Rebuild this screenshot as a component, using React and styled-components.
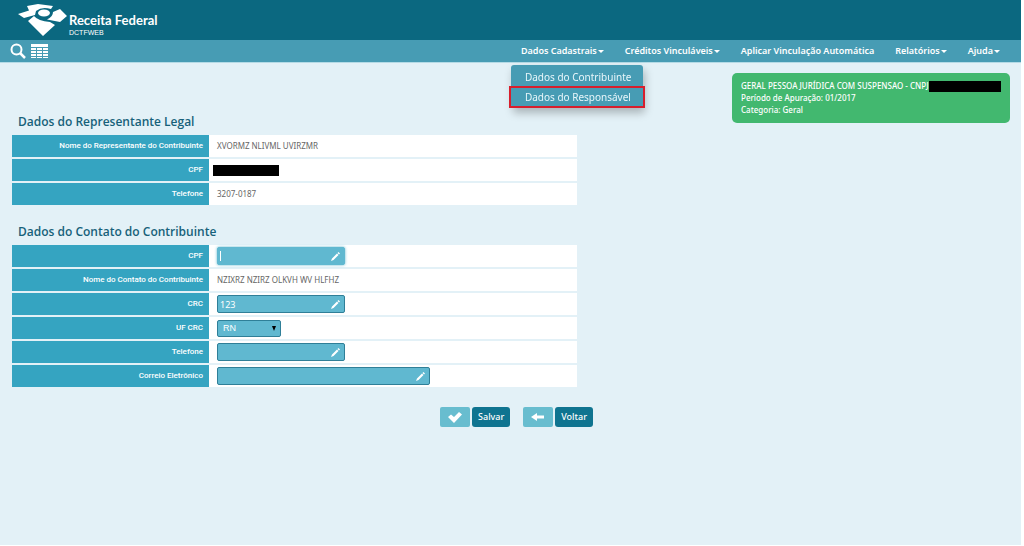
import React from "react";
import styled, { createGlobalStyle } from "styled-components";

const GlobalStyle = createGlobalStyle`
  *{
    box-sizing: border-box;
  }
  html{
    background: #fff;
  }
  body{
    margin: 0;
    font-family: "Noto Sans", "Open Sans", sans-serif;
  }
  button, input, select{
    font-family: inherit;
  }
`

const Page = styled.div`
  min-height: calc(100vh - 1px);
  margin-right: 3px;
  background: #e3f1f7;
`

const Header = styled.header`
  display: flex;
  height: 40px;
  padding: 3px 18px 0;
  background: #0b6880;
  color: #fff;
`

const Brand = styled.div`
  display: flex;
  flex-direction: column;
  padding: 9px 0 0 2px;
`

const BrandName = styled.strong`
  font-size: 13px;
  line-height: 16px;
  font-family: Lato, "Open Sans", sans-serif;
`

const BrandSystem = styled.span`
  font: 7px/10px "Liberation Sans", Arial, sans-serif;
`

const Toolbar = styled.div`
  display: flex;
  align-items: center;
  justify-content: space-between;
  height: 23px;
  padding: 0 21px 0 10px;
  background: #479cb4;
  border-bottom: 1px solid #b5dbe6;
`

const Tools = styled.div`
  display: flex;
  gap: 5px;
`

const ToolButton = styled.button`
  display: flex;
  padding: 0;
  border: 0;
  background: none;
  color: #fff;
`

const Menu = styled.nav`
  display: flex;
  gap: 21px;
`

const MenuItem = styled.div`
  position: relative;
`

const MenuLink = styled.a`
  display: flex;
  align-items: center;
  gap: 1px;
  color: #fff;
  font-size: 9px;
  line-height: 16px;
  font-weight: 600;
  text-decoration: none;
`

const Arrow = styled.span`
  border: 3px solid transparent;
  border-top-color: #fff;
  border-bottom: 0;
`

const Dropdown = styled.div`
  position: absolute;
  top: 22px;
  left: -10px;
  z-index: 1;
  width: 132px;
  padding: 3px 0 2px;
  border-radius: 3px;
  background: #479cb4;
  box-shadow: 2px 5px 8px rgba(0, 0, 0, 0.25);
`

const DropdownLink = styled.a`
  display: block;
  padding: 0 14px;
  color: #e8f6fa;
  font-size: 10px;
  line-height: 19px;
  white-space: nowrap;
  text-decoration: none;
  ${({ $marked }) => $marked && "margin-top: 1px; line-height: 18px; outline: 2px solid #d81e2c;"}
`

const Content = styled.main`
  display: grid;
  grid-template-columns: minmax(0, 565px) auto;
  justify-content: space-between;
  align-items: start;
  column-gap: 20px;
  padding: 10px 11px 20px 12px;
`

const Sections = styled.div`
  padding-top: 40px;
`

const Section = styled.section`
  margin-bottom: 16px;
`

const Title = styled.h2`
  margin: 0;
  padding: 0 6px 2px;
  color: #17617a;
  font-family: "Open Sans", sans-serif;
  font-size: 12px;
  line-height: 18px;
  font-weight: 600;
`

const Table = styled.table`
  width: 100%;
  border-collapse: separate;
  border-spacing: 0 2px;
  table-layout: fixed;
`

const Label = styled.th`
  width: 197px;
  height: 22px;
  padding: 0 6px 0 0;
  background: #35a4c1;
  color: #fff;
  font-family: Roboto, sans-serif;
  font-size: 8px;
  line-height: 12px;
  font-weight: 500;
  text-align: right;
`

const Value = styled.td`
  padding: 0 8px;
  background: #fff;
  color: #666;
  font-size: 8px;
  line-height: 12px;
`

const Redacted = styled.span`
  display: block;
  width: 66px;
  height: 11px;
  margin-left: -4px;
  background: #000;
`

const Field = styled.div`
  display: flex;
  align-items: center;
  justify-content: space-between;
  width: ${({ $wide }) => ($wide ? 213 : 128)}px;
  height: 18px;
  padding: 0 4px 0 2px;
  border: 1px solid #2f7f98;
  border-radius: 2px;
  background: #60b8d0;
  color: #fff;
  &:focus-within{
    border-color: #60b8d0;
    box-shadow: 0 0 3px #60b8d0;
  }
  &:focus-within::before{
    content: "";
    width: 1px;
    height: 10px;
    background: #fff;
  }
`

const Input = styled.input`
  flex: 1;
  min-width: 0;
  padding: 0;
  border: 0;
  outline: 0;
  background: none;
  color: #fff;
  caret-color: transparent;
  font-size: 9px;
`

const SelectBox = styled.div`
  display: grid;
  align-items: center;
  width: 64px;
  height: 17px;
  > *{
    grid-area: 1 / 1;
  }
`

const Select = styled.select`
  height: 17px;
  padding: 0 5px;
  appearance: none;
  border: 1px solid #2f7f98;
  border-radius: 2px;
  background: #60b8d0;
  color: #fff;
  font-size: 9px;
  font-family: "Liberation Sans", Arial, sans-serif;
`

const SelectArrow = styled.span`
  justify-self: end;
  margin-right: 5px;
  border: 2px solid transparent;
  border-top: 5px solid #000;
  border-bottom: 0;
  pointer-events: none;
`

const Summary = styled.aside`
  width: 278px;
  padding: 7px 9px;
  border-radius: 5px;
  background: #42b86f;
  color: #fff;
  font-size: 8px;
  line-height: 12px;
  font-weight: 500;
`

const SummaryLine = styled.div`
  display: flex;
  align-items: center;
  white-space: nowrap;
  span{
    flex: 1;
    height: 11px;
    background: #000;
  }
`

const Actions = styled.div`
  grid-column: 1 / -1;
  display: flex;
  justify-content: center;
  gap: 13px;
  padding: 2px 0 0 11px;
`

const Action = styled.button`
  display: flex;
  gap: 2px;
  padding: 0;
  border: 0;
  background: none;
  color: #fff;
  font-size: 9px;
  line-height: 20px;
  font-weight: 500;
`

const ActionIcon = styled.span`
  display: flex;
  align-items: center;
  justify-content: center;
  width: 30px;
  height: 20px;
  border-radius: 2px;
  background: #68bdcf;
`

const ActionText = styled.span`
  padding: 0 6px;
  border-radius: 3px;
  background: #0f7490;
`

const Logo = () => (
  <svg width="49" height="34" viewBox="0 0 49 34" fill="#fff" aria-hidden="true">
    <path d="M0 11 L11 7.500 L9 3 L20 1 L35 3 L33 6 Q24 3 18 8 L17 12 L6 15 Z" />
    <path d="M35 9 L42 6 L49 13 L42 19 L29 16.500 Q35 14 35 9 Z" />
    <path d="M10 18 L16 13 Q20 18 32 19 L37 22 L25 33 Z" />
    <ellipse cx="26" cy="10" rx="6" ry="3.500" />
  </svg>
)

const SearchIcon = () => (
  <svg width="16" height="16" viewBox="0 0 16 16" fill="none" stroke="#fff" aria-hidden="true">
    <circle cx="6.500" cy="6.500" r="5" strokeWidth="2" />
    <path d="M10 10 L15 15" strokeWidth="2.500" />
  </svg>
)

const GridIcon = () => (
  <svg width="17" height="16" viewBox="0 0 17 16" fill="#fff" aria-hidden="true">
    <path d="M0 1h17v3H0z M0 5h5v2H0z M6 5h5v2H6z M12 5h5v2h-5z M0 8h5v2H0z M6 8h5v2H6z M12 8h5v2h-5z M0 11h5v2H0z M6 11h5v2H6z M12 11h5v2h-5z M0 14h5v1H0z M6 14h5v1H6z M12 14h5v1h-5z" />
  </svg>
)

const Pencil = () => (
  <svg width="9" height="9" viewBox="0 0 9 9" fill="#fff" aria-hidden="true">
    <path d="M0 9 L1 6.500 L6 1.500 L7.500 3 L2.500 8 Z M6.500 1 L7.500 0 L9 1.500 L8 2.500 Z" />
  </svg>
)

const TextField = ({ id, wide, ...props }) => (
  <Field $wide={wide}>
    <Input id={id} type="text" {...props} />
    <Pencil />
  </Field>
)

const Row = ({ label, htmlFor, children }) => (
  <tr>
    <Label scope="row">{htmlFor ? <label htmlFor={htmlFor}>{label}</label> : label}</Label>
    <Value>{children}</Value>
  </tr>
)

const App = () => (
  <>
    <GlobalStyle />
    <Page>
      <Header>
        <Logo />
        <Brand>
          <BrandName>Receita Federal</BrandName>
          <BrandSystem>DCTFWEB</BrandSystem>
        </Brand>
      </Header>
      <Toolbar>
        <Tools>
          <ToolButton aria-label="Pesquisar"><SearchIcon /></ToolButton>
          <ToolButton aria-label="Lista"><GridIcon /></ToolButton>
        </Tools>
        <Menu>
          <MenuItem>
            <MenuLink href="#">Dados Cadastrais<Arrow /></MenuLink>
            <Dropdown>
              <DropdownLink href="#">Dados do Contribuinte</DropdownLink>
              <DropdownLink href="#" $marked>Dados do Responsável</DropdownLink>
            </Dropdown>
          </MenuItem>
          <MenuItem><MenuLink href="#">Créditos Vinculáveis<Arrow /></MenuLink></MenuItem>
          <MenuItem><MenuLink href="#">Aplicar Vinculação Automática</MenuLink></MenuItem>
          <MenuItem><MenuLink href="#">Relatórios<Arrow /></MenuLink></MenuItem>
          <MenuItem><MenuLink href="#">Ajuda<Arrow /></MenuLink></MenuItem>
        </Menu>
      </Toolbar>
      <Content>
        <Sections>
          <Section>
            <Title>Dados do Representante Legal</Title>
            <Table>
              <tbody>
                <Row label="Nome do Representante do Contribuinte">XVORMZ NLIVML UVIRZMR</Row>
                <Row label="CPF"><Redacted /></Row>
                <Row label="Telefone">3207-0187</Row>
              </tbody>
            </Table>
          </Section>
          <Section>
            <Title>Dados do Contato do Contribuinte</Title>
            <Table>
              <tbody>
                <Row label="CPF" htmlFor="cpf"><TextField id="cpf" autoFocus /></Row>
                <Row label="Nome do Contato do Contribuinte">NZIXRZ NZIRZ OLKVH WV HLFHZ</Row>
                <Row label="CRC" htmlFor="crc"><TextField id="crc" defaultValue="123" /></Row>
                <Row label="UF CRC" htmlFor="uf">
                  <SelectBox>
                    <Select id="uf"><option>RN</option></Select>
                    <SelectArrow />
                  </SelectBox>
                </Row>
                <Row label="Telefone" htmlFor="telefone"><TextField id="telefone" /></Row>
                <Row label="Correio Eletrônico" htmlFor="email"><TextField id="email" wide /></Row>
              </tbody>
            </Table>
          </Section>
        </Sections>
        <Summary>
          <SummaryLine>GERAL PESSOA JURÍDICA COM SUSPENSAO - CNPJ<span /></SummaryLine>
          <SummaryLine>Período de Apuração: 01/2017</SummaryLine>
          <SummaryLine>Categoria: Geral</SummaryLine>
        </Summary>
        <Actions>
          <Action type="button">
            <ActionIcon>
              <svg width="14" height="11" viewBox="0 0 14 11" fill="#fff" aria-hidden="true">
                <path d="M0 5 L3 2.500 L6 5 L11 0 L14 2.500 L6 11 Z" />
              </svg>
            </ActionIcon>
            <ActionText>Salvar</ActionText>
          </Action>
          <Action type="button">
            <ActionIcon>
              <svg width="14" height="8" viewBox="0 0 14 8" fill="#fff" aria-hidden="true">
                <path d="M0 4 L6 0 V2.500 H13 V5.500 H6 V8 Z" />
              </svg>
            </ActionIcon>
            <ActionText>Voltar</ActionText>
          </Action>
        </Actions>
      </Content>
    </Page>
  </>
);

export default App;
